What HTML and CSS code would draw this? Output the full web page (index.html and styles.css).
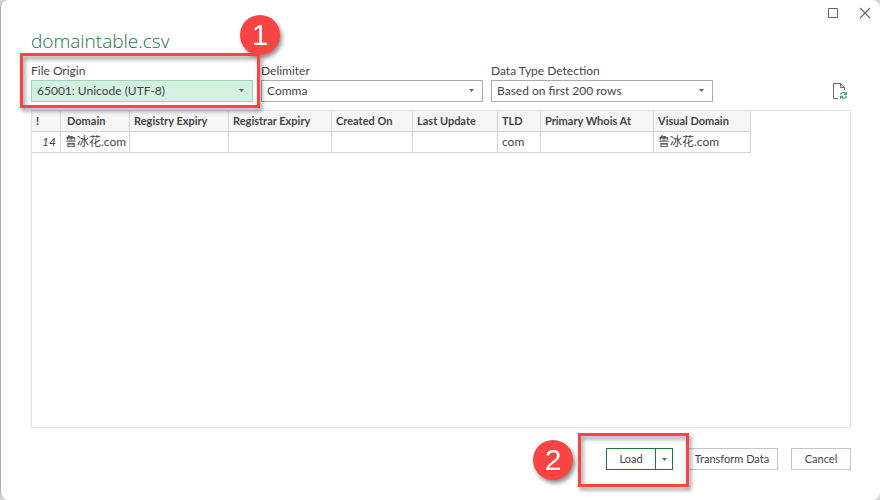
FILE: index.html
```
<!DOCTYPE html>
<html lang="en">
<head>
<meta charset="utf-8">
<meta name="viewport" content="width=device-width, initial-scale=1">
<title>domaintable.csv</title>
<link rel="stylesheet" href="styles.css">
</head>
<body>
<main class="dialog">
  <div class="window-controls">
    <button class="icon-button" type="button" aria-label="Maximize">
      <svg width="12" height="12" viewBox="0 0 12 12"><path d="M1.5 1.5h9v9h-9z" fill="none" stroke="#666"/></svg>
    </button>
    <button class="icon-button" type="button" aria-label="Close">
      <svg width="12" height="12" viewBox="0 0 12 12"><path d="M1 1l10 10M11 1L1 11" fill="none" stroke="#666" stroke-width="1.2"/></svg>
    </button>
  </div>
  <div class="content">
    <h1 class="title">domaintable.csv</h1>
    <div class="options">
      <div class="field">
        <label for="origin">File Origin</label>
        <div class="select-box">
          <select id="origin" class="selected"><option>65001: Unicode (UTF-8)</option></select>
          <svg class="caret" width="5" height="3" viewBox="0 0 5 3"><path d="M0 0h5L2.500 3z" fill="#666"/></svg>
        </div>
        <div class="callout callout-origin"><span class="badge">1</span></div>
      </div>
      <div class="field">
        <label for="delimiter">Delimiter</label>
        <div class="select-box">
          <select id="delimiter"><option>Comma</option></select>
          <svg class="caret" width="5" height="3" viewBox="0 0 5 3"><path d="M0 0h5L2.500 3z" fill="#666"/></svg>
        </div>
      </div>
      <div class="field">
        <label for="detection">Data Type Detection</label>
        <div class="select-box">
          <select id="detection"><option>Based on first 200 rows</option></select>
          <svg class="caret" width="5" height="3" viewBox="0 0 5 3"><path d="M0 0h5L2.500 3z" fill="#666"/></svg>
        </div>
      </div>
      <button class="icon-button refresh" type="button" aria-label="Refresh preview">
        <svg width="16" height="18" viewBox="0 0 16 18" fill="none">
          <path d="M6 16.500H1.500V1.500H8.500L12.500 5.500V8M8.500 1.500V5.500H12.500" stroke="#666"/>
          <path d="M8.500 12.500C9 10.500 12 10 14 11.500M14.500 10V12.500H12M14.500 14C14 16.500 11 16.700 9.300 15.300M8.500 17V14.500H11" stroke="#4fa284" stroke-width="1.300"/>
        </svg>
      </button>
    </div>
    <div class="preview">
      <table>
        <colgroup>
          <col class="c-index"><col class="c-domain"><col class="c-registry"><col class="c-registrar"><col class="c-created"><col class="c-update"><col class="c-tld"><col class="c-whois"><col class="c-visual">
        </colgroup>
        <thead>
          <tr><th>!</th><th class="domain">Domain</th><th>Registry Expiry</th><th>Registrar Expiry</th><th>Created On</th><th>Last Update</th><th>TLD</th><th>Primary Whois At</th><th>Visual Domain</th></tr>
        </thead>
        <tbody>
          <tr><td class="index">14</td><td>鲁冰花.com</td><td></td><td></td><td></td><td></td><td>com</td><td></td><td>鲁冰花.com</td></tr>
        </tbody>
      </table>
    </div>
    <div class="actions">
      <div class="split">
        <button class="button load" type="button">Load</button>
        <button class="button more" type="button" aria-label="Load options">
          <svg width="5" height="3" viewBox="0 0 5 3"><path d="M0 0h5L2.500 3z" fill="#666"/></svg>
        </button>
        <div class="callout callout-load"><span class="badge">2</span></div>
      </div>
      <button class="button transform" type="button">Transform Data</button>
      <button class="button cancel" type="button">Cancel</button>
    </div>
  </div>
</main>
</body>
</html>
```
FILE: styles.css
```
* { box-sizing: border-box; }

body {
  margin: 0;
  background: #d4d4d4;
  color: #444;
  font: 12px/16px Lato, "Noto Sans CJK SC", sans-serif;
}

button, select { font: inherit; color: inherit; }

.dialog {
  display: flex;
  flex-direction: column;
  min-height: 100vh;
  background: #fff;
  border-left: 1px solid #b0b0b0;
  border-radius: 8px;
}

.window-controls {
  display: flex;
  justify-content: flex-end;
  gap: 20px;
  padding: 7px 9px 0 0;
}

.icon-button {
  display: flex;
  padding: 0;
  border: 0;
  background: none;
}

.content {
  flex: 1;
  display: flex;
  flex-direction: column;
  padding: 8px 29px 30px 30px;
}

.title {
  margin: 0;
  font-family: "Open Sans", sans-serif;
  font-size: 19px;
  font-weight: 300;
  line-height: 28px;
  color: #217346;
}

.options {
  display: flex;
  gap: 8px;
  padding-top: 8px;
}

.field {
  position: relative;
  flex: 0 1 222px;
}

.field label {
  display: block;
  padding-bottom: 1px;
}

.select-box { position: relative; }

select {
  display: block;
  width: 100%;
  height: 22px;
  padding: 0 20px 0 5px;
  appearance: none;
  border: 1px solid #ababab;
  border-radius: 0;
  background: #fff;
}

.selected {
  border-color: #9fd5b7;
  background: #d3f0e0;
}

.caret {
  position: absolute;
  right: 9px;
  top: 9px;
  pointer-events: none;
}

.refresh {
  margin-left: auto;
  align-self: flex-end;
  padding: 0 3px 2px 0;
}

.preview {
  flex: 1;
  margin-top: 8px;
  border: 1px solid #e1e1e1;
}

table {
  table-layout: fixed;
  width: 719px;
  border-collapse: separate;
  border-spacing: 0;
}

th, td {
  height: 21px;
  padding: 0 4px;
  border: solid #d4d4d4;
  border-width: 0 1px 1px 0;
  text-align: left;
  white-space: nowrap;
}

th {
  background: #f5f5f5;
  font-size: 11px;
  font-weight: 700;
}

.domain { padding-left: 6px; }
.index { font-style: italic; text-align: right; }

.c-index { width: 29px; }
.c-domain { width: 69px; }
.c-registry { width: 99px; }
.c-registrar { width: 103px; }
.c-created { width: 81px; }
.c-update { width: 85px; }
.c-tld { width: 43px; }
.c-whois { width: 113px; }
.c-visual { width: 97px; }

.actions {
  display: flex;
  justify-content: flex-end;
  gap: 13px;
  padding-top: 20px;
}

.split {
  position: relative;
  display: flex;
}

.button {
  height: 22px;
  padding: 0;
  border: 1px solid #c6c6c6;
  background: #fff;
  font-size: 11px;
}

.load { width: 50px; border-color: #217346; }

.more {
  display: flex;
  align-items: center;
  justify-content: center;
  width: 18px;
  margin-left: -1px;
  border-color: #217346;
}

.transform { width: 92px; }
.cancel { width: 60px; }

.callout {
  position: absolute;
  z-index: 1;
  border: 3px solid #fa4343;
  filter: drop-shadow(2px 3px 2px rgba(0, 0, 0, 0.45));
  pointer-events: none;
}

.callout-origin { inset: -10px -7px -6px -11px; }
.callout-load { inset: -15px -16px -17px -28px; }

.badge {
  position: absolute;
  width: 40px;
  height: 40px;
  border-radius: 50%;
  background: #fa4343;
  color: #fff;
  font: 30px/40px "Liberation Sans", sans-serif;
  text-align: center;
}

.callout-origin .badge { right: -23px; top: -41px; }
.callout-load .badge { left: -48px; top: 4px; }
```
